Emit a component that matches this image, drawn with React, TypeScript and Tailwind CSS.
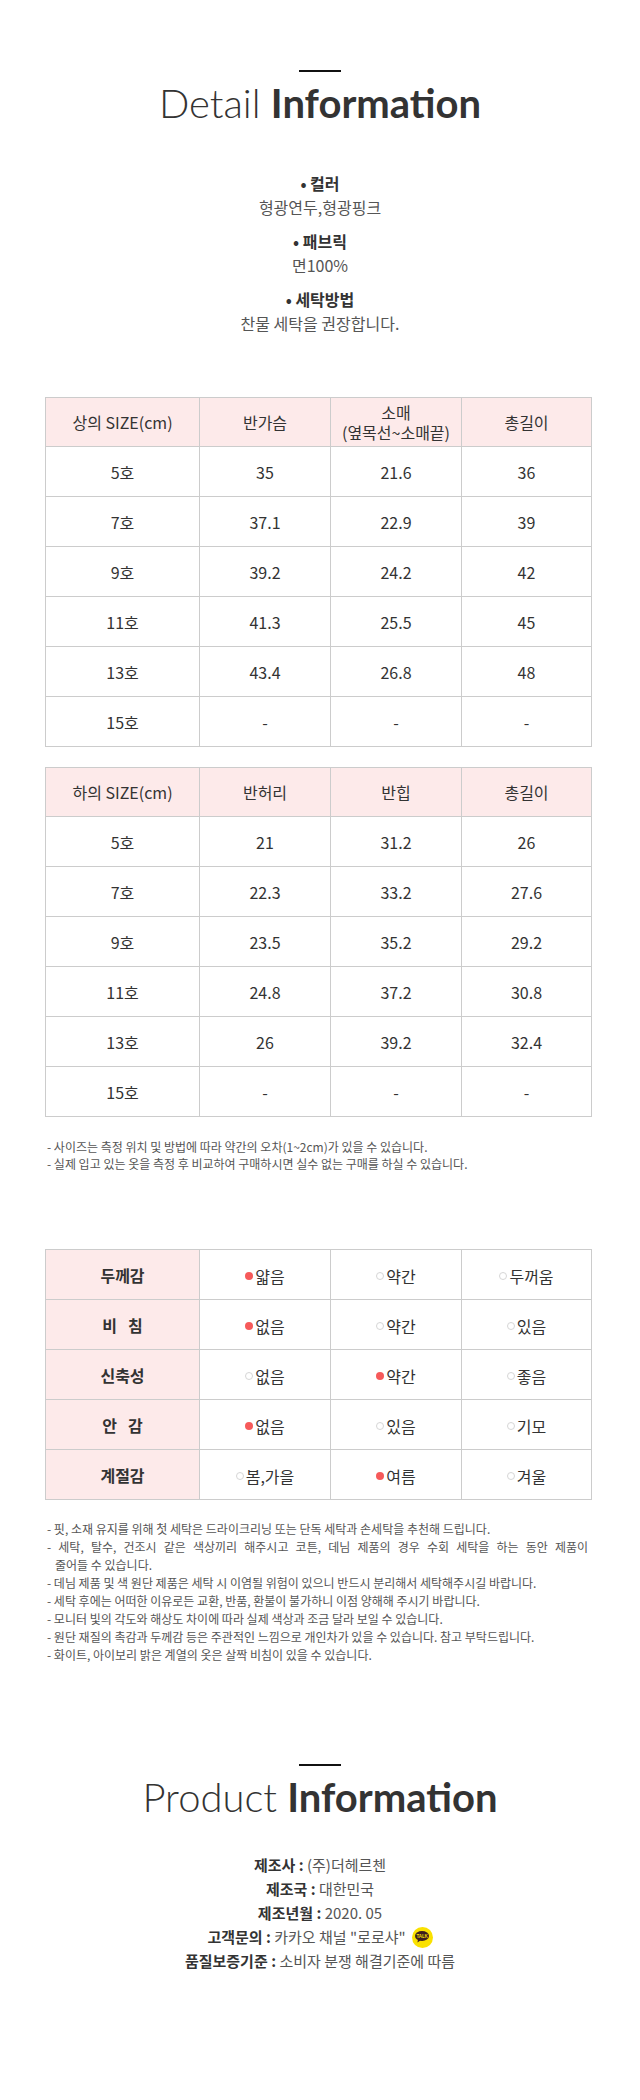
const kr = { fontFamily: '"Noto Sans CJK KR", "Noto Sans", sans-serif' };
const lato = { fontFamily: 'Lato, "Liberation Sans", sans-serif' };

const topRows = [
  ['5호', '35', '21.6', '36'],
  ['7호', '37.1', '22.9', '39'],
  ['9호', '39.2', '24.2', '42'],
  ['11호', '41.3', '25.5', '45'],
  ['13호', '43.4', '26.8', '48'],
  ['15호', '-', '-', '-'],
];

const bottomRows = [
  ['5호', '21', '31.2', '26'],
  ['7호', '22.3', '33.2', '27.6'],
  ['9호', '23.5', '35.2', '29.2'],
  ['11호', '24.8', '37.2', '30.8'],
  ['13호', '26', '39.2', '32.4'],
  ['15호', '-', '-', '-'],
];

const feel: { label: string; opts: [string, boolean][] }[] = [
  { label: '두께감', opts: [['얇음', true], ['약간', false], ['두꺼움', false]] },
  { label: '비\u00a0\u00a0\u00a0침', opts: [['없음', true], ['약간', false], ['있음', false]] },
  { label: '신축성', opts: [['없음', false], ['약간', true], ['좋음', false]] },
  { label: '안\u00a0\u00a0\u00a0감', opts: [['없음', true], ['있음', false], ['기모', false]] },
  { label: '계절감', opts: [['봄,가을', false], ['여름', true], ['겨울', false]] },
];

function Heading({ light, bold }: { light: string; bold: string }) {
  return (
    <div className="flex flex-col items-center">
      <div className="h-[2px] w-[42px] bg-[#111]" />
      <h2 className="mt-[7px] text-[40px] leading-[48px] text-[#333]" style={lato}>
        <span className="font-light">{light}</span> <span className="font-bold">{bold}</span>
      </h2>
    </div>
  );
}

function Cols() {
  return (
    <colgroup>
      <col className="w-[154px]" />
      <col className="w-[131px]" />
      <col className="w-[131px]" />
      <col />
    </colgroup>
  );
}

function SizeTable({ head, rows }: { head: React.ReactNode[]; rows: string[][] }) {
  return (
    <table className="ml-[45px] w-[547px] table-fixed border-collapse text-[16px] text-[#333]" style={kr}>
      <Cols />
      <thead>
        <tr className="h-[49px] bg-[#fdeaea]">
          {head.map((h, i) => (
            <th key={i} className="border border-[#ccc] p-0 font-normal leading-[20px]">
              {h}
            </th>
          ))}
        </tr>
      </thead>
      <tbody>
        {rows.map((r) => (
          <tr key={r[0]} className="h-[50px]">
            {r.map((c, i) => (
              <td key={i} className="border border-[#ccc] p-0 text-center">
                {c}
              </td>
            ))}
          </tr>
        ))}
      </tbody>
    </table>
  );
}

function Dot({ on }: { on: boolean }) {
  return on ? (
    <span className="mr-[2px] inline-block h-[8px] w-[8px] rounded-full bg-[#f65a5a]" />
  ) : (
    <span className="mr-[2px] inline-block h-[8px] w-[8px] rounded-full border border-[#d6d6d6]" />
  );
}

function KakaoIcon() {
  return (
    <span className="ml-[6px] inline-flex h-[21px] w-[21px] items-center justify-center rounded-full bg-[#fae100]">
      <svg width="14" height="12" viewBox="0 0 14 12">
        <ellipse cx="7" cy="5" rx="7" ry="5" fill="#3c1e1e" />
        <path d="M3 8 L2.5 11.5 L6 9 Z" fill="#3c1e1e" />
        <text x="7" y="6.6" textAnchor="middle" fontSize="4.6" fontWeight="700" fill="#fae100" fontFamily="Lato, sans-serif">
          TALK
        </text>
      </svg>
    </span>
  );
}

export default function App() {
  return (
    <div className="w-[640px] bg-white pb-[130px] pt-[70px]">
      <Heading light="Detail" bold="Information" />

      <div className="mt-[44px] flex flex-col items-center text-[16px] leading-[24px]" style={kr}>
        <p className="font-bold text-[#333]">• 컬러</p>
        <p className="text-[#555]">형광연두,형광핑크</p>
        <p className="mt-[10px] font-bold text-[#333]">• 패브릭</p>
        <p className="text-[#555]">면100%</p>
        <p className="mt-[10px] font-bold text-[#333]">• 세탁방법</p>
        <p className="text-[#555]">찬물 세탁을 권장합니다.</p>
      </div>

      <div className="mt-[62px]">
        <SizeTable
          head={[
            '상의 SIZE(cm)',
            '반가슴',
            <>
              소매
              <br />
              (옆목선~소매끝)
            </>,
            '총길이',
          ]}
          rows={topRows}
        />
      </div>

      <div className="mt-[20px]">
        <SizeTable head={['하의 SIZE(cm)', '반허리', '반힙', '총길이']} rows={bottomRows} />
      </div>

      <div className="ml-[47px] mt-[21px] text-[12px] leading-[17px] text-[#555]" style={kr}>
        <p>- 사이즈는 측정 위치 및 방법에 따라 약간의 오차(1~2cm)가 있을 수 있습니다.</p>
        <p>- 실제 입고 있는 옷을 측정 후 비교하여 구매하시면 실수 없는 구매를 하실 수 있습니다.</p>
      </div>

      <table className="ml-[45px] mt-[77px] w-[547px] table-fixed border-collapse text-[16px] text-[#333]" style={kr}>
        <Cols />
        <tbody>
          {feel.map((f) => (
            <tr key={f.label} className="h-[50px]">
              <th className="border border-[#ccc] bg-[#fdeaea] p-0 font-bold">{f.label}</th>
              {f.opts.map(([t, on]) => (
                <td key={t} className="border border-[#ccc] p-0 text-center">
                  <span className="inline-flex items-center">
                    <Dot on={on} />
                    {t}
                  </span>
                </td>
              ))}
            </tr>
          ))}
        </tbody>
      </table>

      <div className="ml-[47px] mt-[20px] w-[541px] text-[12px] leading-[18px] text-[#555]" style={kr}>
        <p>- 핏, 소재 유지를 위해 첫 세탁은 드라이크리닝 또는 단독 세탁과 손세탁을 추천해 드립니다.</p>
        <p className="text-justify [text-align-last:justify]">
          - 세탁, 탈수, 건조시 같은 색상끼리 해주시고 코튼, 데님 제품의 경우 수회 세탁을 하는 동안 제품이
        </p>
        <p className="pl-[8px]">줄어들 수 있습니다.</p>
        <p>- 데님 제품 및 색 원단 제품은 세탁 시 이염될 위험이 있으니 반드시 분리해서 세탁해주시길 바랍니다.</p>
        <p>- 세탁 후에는 어떠한 이유로든 교환, 반품, 환불이 불가하니 이점 양해해 주시기 바랍니다.</p>
        <p>- 모니터 빛의 각도와 해상도 차이에 따라 실제 색상과 조금 달라 보일 수 있습니다.</p>
        <p>- 원단 재질의 촉감과 두께감 등은 주관적인 느낌으로 개인차가 있을 수 있습니다. 참고 부탁드립니다.</p>
        <p>- 화이트, 아이보리 밝은 계열의 옷은 살짝 비침이 있을 수 있습니다.</p>
      </div>

      <div className="mt-[100px]">
        <Heading light="Product" bold="Information" />
      </div>

      <div className="mt-[32px] flex flex-col items-center text-[15px] leading-[24px] text-[#555]" style={kr}>
        <p>
          <b className="text-[#333]">제조사 :</b> (주)더헤르첸
        </p>
        <p>
          <b className="text-[#333]">제조국 :</b> 대한민국
        </p>
        <p>
          <b className="text-[#333]">제조년월 :</b> 2020. 05
        </p>
        <p className="flex items-center">
          <span>
            <b className="text-[#333]">고객문의 :</b> 카카오 채널 "로로샤"
          </span>
          <KakaoIcon />
        </p>
        <p>
          <b className="text-[#333]">품질보증기준 :</b> 소비자 분쟁 해결기준에 따름
        </p>
      </div>
    </div>
  );
}
